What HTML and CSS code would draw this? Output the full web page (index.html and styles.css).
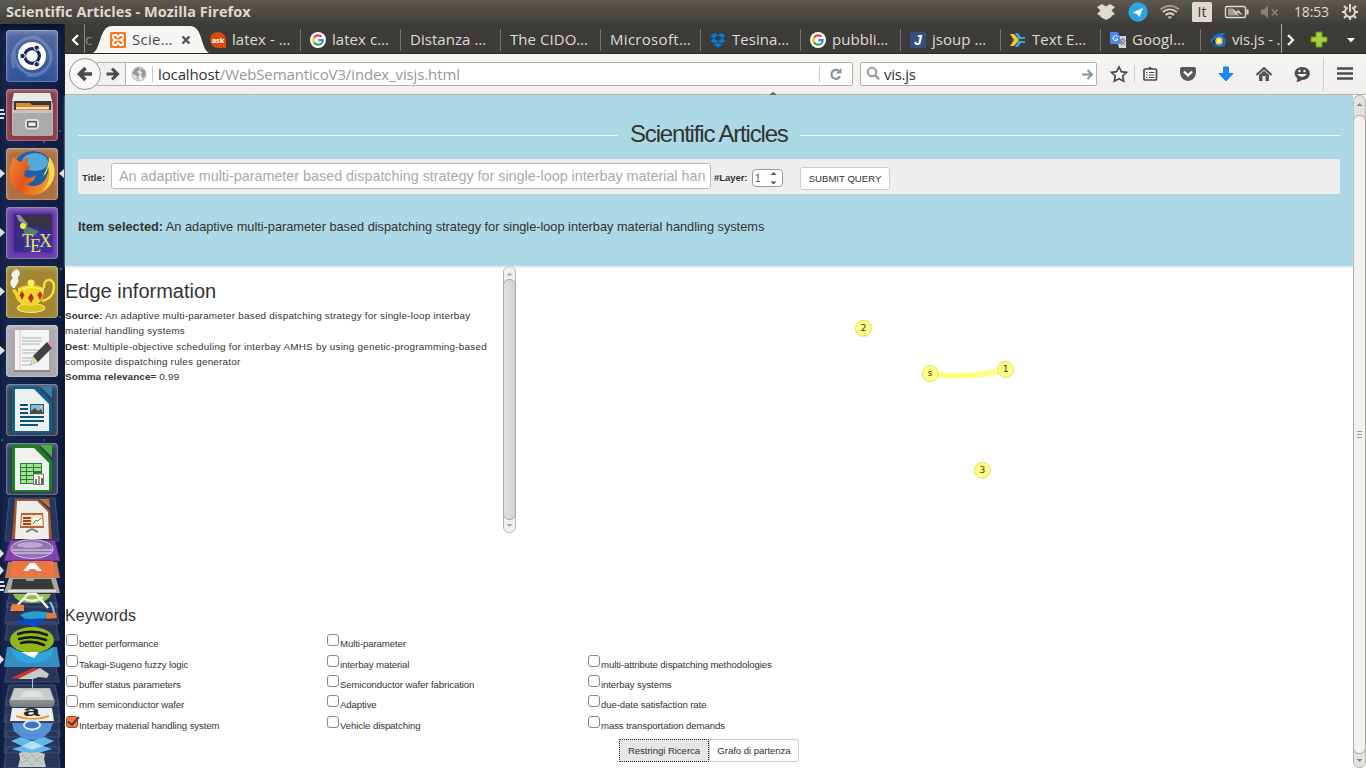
FILE: index.html
```html
<!DOCTYPE html>
<html lang="it">
<head>
<meta charset="utf-8">
<title>Scientific Articles</title>
<link rel="stylesheet" href="styles.css">
</head>
<body>
<div class="panel">
  <span class="panel-title">Scientific Articles - Mozilla Firefox</span>
  <svg class="indicators" width="276" height="24" viewBox="1090 0 276 24">
    <g fill="#dfdbd2">
      <path d="M1097 7l5-3 4 2.500 4-2.500 5 3-3.500 3.500 3.500 3.500-3.500 2v1l-5.500 3-5.500-3v-1l-3.500-2 3.500-3.500z"/>
      <circle cx="1138" cy="12" r="9.700" fill="#2ca5e0"/>
      <path d="M1132.500 12.500l10.500-4.500-3.500 9-2.500-3-4.500-1.500z" fill="#fff"/>
      <path d="M1167.500 16.500h4.500l-2.200 2.500z"/>
      <g fill="none" stroke="#dfdbd2" stroke-width="1.700"><path d="M1165.500 15q4.300-3.500 8.600 0"/><path d="M1162.800 12q7-5.500 14 0"/><path d="M1160.500 9.500q9.300-7.500 18.600 0" stroke="#98958d"/></g>
      <rect x="1192" y="2" width="20" height="20" rx="1.500"/>
      <text class="it" x="1197.500" y="17">It</text>
      <rect x="1225.500" y="6.500" width="20" height="11" rx="1.500" fill="none" stroke="#dfdbd2" stroke-width="1.400"/>
      <path d="M1246.500 9.500h2v5h-2z"/><path d="M1228 8.500h4l8 7h-12z" opacity=".6"/>
      <path d="M1231.500 8l5.500 4 1-2.500 5 6-5.500-3-1 2.500z"/>
      <path d="M1261 9.500h3l4-4v13l-4-4h-3z" fill="#85827a"/>
      <path d="M1272 9.500l5.500 6m0-6l-5.500 6" stroke="#85827a" stroke-width="1.700"/>
    </g>
    <text class="clock" x="1294" y="17" textLength="35">18:53</text>
    <g transform="translate(1350 12)" stroke="#dfdbd2" fill="none"><path d="M-2.300 -4.500A5 5 0 1 0 2.300 -4.500" stroke-width="2"/><path d="M0-8v8" stroke-width="2"/><path d="M-4.200-4.200l-1.800-1.800M4.200-4.200l1.800-1.800M-5.500 0h-2.500M5.500 0h2.500M-4 4l-2 2M4 4l2 2M0 5.500v2.500" stroke-width="2.200"/></g>
  </svg>
</div>
<div class="desktop">
  <div class="launcher">
    <div class="tiles">
      <svg class="tile blue" viewBox="0 0 52 52"><g fill="none" stroke="#a9bce0" stroke-width="3" opacity=".35"><path d="M8 38C2 20 15 4 33 8M19 9c15-5 29 9 25 25M44 20c5 14-7 28-23 25M36 43C21 49 7 36 8 21"/></g><circle cx="26" cy="26" r="14" fill="#fff"/><circle cx="26" cy="26" r="7.400" fill="none" stroke="#182b5b" stroke-width="3.200"/><g fill="#182b5b" stroke="#fff"><circle cx="16.500" cy="26" r="2.700"/><circle cx="30.700" cy="17.700" r="2.700"/><circle cx="30.700" cy="34.300" r="2.700"/></g></svg>
      <svg class="tile red" viewBox="0 0 52 52"><path d="M8 4h36l3 13v29H6V17z" fill="#b9b9b9"/><path d="M8 4h36l2 8H6z" fill="#e8e8e8"/><path d="M8 12h37v10H8z" fill="#383838"/><path d="M10 14h14l2 2h17v6H10z" fill="#e18536"/><path d="M10 18h33v2H10z" fill="#ffe3c5"/><path d="M7 21h39v26H7z" fill="#aaa"/><path d="M7 21h39v3H7z" fill="#c4c4c4"/><rect x="20" y="31" width="12" height="8.500" rx="2" fill="#555" stroke="#ddd" stroke-width="2"/><path d="M22.500 33.500h7v3.500h-7z" fill="#eee"/></svg>
      <svg class="tile orange" viewBox="0 0 52 52"><defs><linearGradient id="fox" x1="0" y1="0" x2="1" y2=".4"><stop stop-color="#f28a2c"/><stop offset=".5" stop-color="#e2541c"/><stop offset="1" stop-color="#f39a28"/></linearGradient></defs><circle cx="27" cy="23" r="20" fill="#205fa5"/><ellipse cx="29" cy="14" rx="13" ry="9" fill="#55a9d8"/><path d="M7 9l7 5 8-5-1 7 4 4-6 3-1 5 5 2 6-2c1 3-3 6-8 8 5 4 14 2 18-4 4-7 4-12 3-16l3 4c6 17-7 27-19 27C10 47 1 34 4 20z" fill="url(#fox)"/><path d="M43 9c10 11 6 28-6 34 7-9 8-17 5-24-1 6-3 8-5 9 4-7 6-13 6-19z" fill="#f9dc4e"/></svg>
      <svg class="tile purple" viewBox="0 0 52 52"><rect x="7" y="6" width="40" height="40" rx="3" fill="#392a82" stroke="#6a2fb0" stroke-width="2"/><path d="M9 8h36v14L23 18z" fill="#333641"/><path d="M10 8h4l8 9-3 5-3-6-3-2z" fill="#8d8f93"/><path d="M17 18l28 13v13H18z" fill="#3c33a8"/><path d="M17 18l16 6-6 6-9-4z" fill="#579456" opacity=".8"/><circle cx="17" cy="19" r="3" fill="#f0ed47"/><g class="tex"><text x="16" y="40" textLength="11">T</text><text x="24" y="45" textLength="10">E</text><text x="33" y="40" textLength="14">X</text></g></svg>
      <svg class="tile gold" viewBox="0 0 52 52"><path d="M7 22c-5-5-2-8 0-10-5-4 3-12 6-7 3 4-2 5-1 8 2 4-3 6-3 9z" fill="#f4f4ef"/><ellipse cx="25" cy="42" rx="14" ry="4.500" fill="#d9bf24" stroke="#fff066"/><path d="M38 22C37 11 48 12 48 20c0 9-4 13-12 15" stroke="#f7de38" stroke-width="2.500" fill="none"/><path d="M12 22q13-6 26 0c0 10-4 18-13 18S11 36 9 29l-3-5 3-1 3 4z" fill="#f2d62b"/><circle cx="25" cy="17" r="3.500" fill="#fff05e"/><path d="M12 24q13-5 26 0" stroke="#fff485" fill="none"/><path d="M16 25l2.500 4-2.500 5-2.500-5zM25 27l3 5-3 5-3-5zM34 25l2.500 4-2.500 5-2.500-5z" fill="#bd2b20"/></svg>
      <svg class="tile silver" viewBox="0 0 52 52"><path d="M9 5h34v41H9z" fill="#f4f4f4"/><path d="M14 5v40" stroke="#edbcbc"/><path d="M16 13h20m-20 3h20m-20 3h18m-18 6h17m-17 3h14m-14 5h10m-10 3h8m-8 4h9" stroke="#abb0b5"/><path d="M24 40l3-9L41 17l5 6-14 14z" fill="#3f4143"/><path d="M24 40l3-9 5 6z" fill="#e4d7a3"/><path d="M41 17l3-1 4 5-2 2z" fill="#dd91bb"/><path d="M8 46h36" stroke="#8b8b8b" stroke-width="2"/></svg>
      <svg class="tile dark" viewBox="0 0 52 52"><path d="M9 2h22l15 16v27q0 4-4 4H9q-3 0-3-3V5q0-3 3-3z" fill="#12618d"/><path d="M9 5h19l15 15v27H9z" fill="#eef0f0"/><path d="M34 2h12v12z" fill="#347fae"/><g stroke="#0b5379" stroke-width="2"><path d="M14 21h8m-8 4h8m-8 4h8m-8 4h24m-24 4h24m-24 4h18"/></g><path d="M24 20h14v10H24z" fill="#115f88"/><path d="M25 21h12v8H25z" fill="#82bce0"/><path d="M25 29v-2l4-3 3 3 3-2 2 4z" fill="#594a2a"/><circle cx="35" cy="23" r="1.500" fill="#f5c042"/></svg>
      <svg class="tile dark" viewBox="0 0 52 52"><path d="M9 2h22l15 16v27q0 4-4 4H9q-3 0-3-3V5q0-3 3-3z" fill="#198219"/><path d="M9 5h19l15 15v27H9z" fill="#f0f1f0"/><path d="M34 2h12v12z" fill="#4bb238"/><path d="M14 20h22v21H14z" fill="#1b8429"/><path d="M15 21h5v3h-5zm6 0h6v3h-6zm7 0h7v3h-7zM15 25h5v3h-5zm6 0h6v3h-6zm7 0h7v3h-7zM15 29h5v3h-5zm6 0h6v3h-6zM15 33h5v3h-5zm6 0h6v3h-6zM15 37h5v3h-5zm6 0h6v3h-6z" fill="#a9df98"/><path d="M27.500 31h10v10.500h-10z" fill="#fff" stroke="#777"/><path d="M29 36h2v5h-2z" fill="#3486c4"/><path d="M32 33h2v8h-2z" fill="#e78432"/><path d="M35 35h2v6h-2z" fill="#2672ad"/></svg>
    </div>
    <svg class="stack" width="65" height="273" viewBox="0 495 65 273">
      <defs><linearGradient id="metal" x2="0" y2="1"><stop stop-color="#b7b8b9"/><stop offset="1" stop-color="#767b82"/></linearGradient></defs>
      <g fill="#27365a" stroke="#4a5978" stroke-width=".8">
        <path d="M9 498h46l4 43H5z"/><path d="M10 592h44l4 15H6zM8 603h48l3 21H5zM8 622h48l3 18H5zM9 660h46l4 22H5zM9 685h46l4 20H5zM7 700h51l2 22H4zM7 715h51l2 22H4zM7 731h51l2 22H4zM7 747h51l2 21H4z"/>
      </g>
      <path d="M15 499h23l12 12 2 28H12z" fill="#a7582b"/><path d="M17 501h20l11 11 1 27H15z" fill="#f0eeea"/><path d="M39 499h10l1 9z" fill="#be7043"/><path d="M21 513h22l1 15H20z" fill="#bc6532"/><path d="M22 515h20l1 11H21z" fill="#f7e4cc"/><path d="M23 518h8m-8 3h8m-8 3h8" stroke="#9c4726" stroke-width="2"/><path d="M33 518h8v7h-8z" fill="#fff"/><path d="M33 524l3-4 2 1 3-3" stroke="#279539" fill="none"/><path d="M26 532l6-3 6 3" stroke="#888" stroke-width="2" fill="none"/>
      <path d="M10 540h45l5 21H4z" fill="#8146ac" stroke="#4c217f"/><ellipse cx="32" cy="549" rx="21" ry="9.500" fill="#8f75ad" stroke="#d2b8e8"/><path d="M12 550h41m-40 3h39" stroke="#e9d9f1"/><ellipse cx="30" cy="545" rx="13" ry="3" fill="#cfb9dd" opacity=".7"/>
      <path d="M8 562h49l3 16H5z" fill="#bf7b55"/><path d="M12 561h41l2 16H10z" fill="#ee7540"/><path d="M23 571l7-8h5l7 8h-5l-2-2h-5l-2 2z" fill="#fff"/>
      <path d="M9 578h47l4 15H4z" fill="#aaa8a0"/><path d="M13 579h38l3 10H11z" fill="#383a3b"/><path d="M8 591h48" stroke="#ddd" stroke-width="2"/><path d="M26 580h8" stroke="#fff"/>
      <path d="M13 594h38q-3 9-19 9t-19-9z" fill="#95bd47"/><path d="M15 608l13-14h8l12 14M23 598q9 6 20-1" stroke="#f0f1e6" stroke-width="2.500" fill="none"/><path d="M50 602q4 6 4 12" stroke="#86c3e2" stroke-width="2" fill="none"/>
      <path d="M12 604l12 1v6H10z" fill="#ed813c"/><path d="M20 615q12-7 35-1l-15 8q-13 0-20-7z" fill="#2b9dcb"/><path d="M14 623q8-5 17-4l17-1-9 5-4 6-8-5z" fill="#094cc0"/><path d="M46 613h10l1 5-10 1z" fill="#e27a34"/>
      <ellipse cx="32" cy="640" rx="22" ry="13" fill="#91b51d"/><path d="M18 634q15-5 29 1M19 639q14-4 27 1M21 643q12-3 23 2" stroke="#151a14" stroke-width="2.500" fill="none" stroke-linecap="round"/>
      <path d="M7 647h4q21 13 42 0h4l3 20H4z" fill="#388ec0"/><path d="M12 648q20 12 41 0-1 15-21 15t-20-15z" fill="#2ba7df"/><path d="M21 652h18l-5 6-5-2z" fill="#fff"/>
      <path d="M11 678l22-10 6 1-17 10z" fill="#cb3234"/><path d="M18 679l12-6 10-5 9 6-2 4-8-1-6 2z" fill="#c8cac9"/><path d="M32.500 678v20" stroke="#b6c1cb"/>
      <path d="M14 688h36l5 14-2 5H11l-2-5z" fill="url(#metal)"/><path d="M15 689h34l5 11H10z" fill="#cbcdcd"/><path d="M23 692q9-3 18 0l2 5H21z" fill="#e0e1e1"/>
      <path d="M12 708h40l2 13H10z" fill="#eef0ef"/><text class="amazon" x="23" y="716" textLength="17" lengthAdjust="spacingAndGlyphs">a</text><path d="M16 716q17 6 33 0" stroke="#f19a2e" stroke-width="2" fill="none"/>
      <path d="M12 723h41l-3 8q-7 9-17 9t-19-9z" fill="#5990d5"/><ellipse cx="32" cy="725" rx="8" ry="4.500" fill="#3e76c1" stroke="#d9eaff" stroke-width="2"/>
      <path d="M11 741l10-4 11 4 12-4 10 4-11 5 9 3-20 6-20-6 10-3z" fill="#62b7eb"/><path d="M32 741l11 5-11 4-10-4z" fill="#b5e1f8"/>
      <path d="M19 753q5-2 11 0l8-1 7 2-1 5 2 8H18l2-8z" fill="#c7cbc8"/><path d="M22 755l5 4 5-5 4 6 6-4M21 763l6-3 5 5 5-5 6 4" fill="none" stroke="#9ea5a5" stroke-dasharray="2 1"/>
    </svg>
    <svg class="running" width="65" height="744" viewBox="0 24 65 744">
      <g fill="#dce0e5"><path d="M0 169l5 4.500-5 4.500zM0 228l5 4.500-5 4.500zM0 287l5 4.500-5 4.500zM0 346l5 4.500-5 4.500zM0 549l4 4.500-4 4.500zM0 566l4 4.500-4 4.500zM0 655l4 4.500-4 4.500zM64 169l-5 4.500 5 4.500z"/><path d="M0 109h4v2H0zm0 4h5v2H0zm0 4h4v2H0zM0 581h4v2H0zm0 4h5v2H0zm0 4h4v2H0z"/></g>
      <g fill="#42679b"><circle cx="60" cy="131" r="1"/><circle cx="44" cy="142" r="1"/><circle cx="61" cy="269" r="1.200"/><circle cx="60" cy="317" r="1"/><circle cx="2" cy="440" r="1"/><circle cx="44" cy="440" r="1"/></g>
    </svg>
  </div>
  <div class="browser">
    <div class="tabs">
      <div class="tab-scroll"><svg width="12" height="16" viewBox="0 0 12 16"><path d="M9 3L4 8l5 5" class="chev"/></svg></div>
      <div class="tab-frag">c</div>
      <div class="tab active">
        <svg class="tab-shape" width="122" height="30" viewBox="0 0 122 30"><path d="M0 30C12 29 8 2 22 2H100C114 2 110 29 122 30z" fill="#f6f5f4"/></svg>
        <svg class="fav" viewBox="0 0 16 16"><rect width="16" height="16" rx="1.500" fill="#f47a24"/><path d="M3 4q0-1 1-1h2l2 2 2-2h2q1 0 1 1v2l-2 2 2 2v2q0 1-1 1h-2l-2-2-2 2H4q-1 0-1-1v-2l2-2-2-2z" fill="none" stroke="#fff" stroke-width="1.800"/><path d="M5 8h6" stroke="#fff" stroke-width="1.500"/></svg>
        <span class="label wide">Scie…</span>
        <svg class="close" width="10" height="10" viewBox="0 0 10 10"><path d="M1.500 1.500l7 7m0-7l-7 7" stroke="#555" stroke-width="2.400"/></svg>
      </div>
      <div class="tab"><svg class="fav" viewBox="0 0 16 16"><path d="M8 0a8 8 0 0 1 8 8v8H8A8 8 0 0 1 8 0z" fill="#dc4a09"/><text class="ask" x="1.800" y="11" textLength="12.500">ask</text></svg><span class="label">latex - …</span></div>
      <div class="tab"><svg class="fav" viewBox="0 0 16 16"><circle cx="8" cy="8" r="8" fill="#fff"/><g fill="none" stroke-width="2.200"><path d="M11.500 4.700A4.700 4.700 0 0 0 4 5.800" stroke="#ea4335"/><path d="M4 5.800a4.700 4.700 0 0 0 0 4.500" stroke="#fbbc05"/><path d="M4 10.300a4.700 4.700 0 0 0 7.300 1.200" stroke="#34a853"/><path d="M11.300 11.500c1-1 1.400-2 1.400-3.300H8.300" stroke="#4285f4"/></g></svg><span class="label">latex c…</span></div>
      <div class="tab"><span class="label">Distanza …</span></div>
      <div class="tab"><span class="label">The CIDO…</span></div>
      <div class="tab"><span class="label wide">Microsoft…</span></div>
      <div class="tab"><svg class="fav" viewBox="0 0 16 16"><path d="M5 1l3 2.500L3.500 6.200.5 3.700zM11 1l4.500 2.700-3 2.500L8 3.500zM.5 8.800l3-2.500L8 9l-3 2.500zM15.500 8.800l-3-2.500L8 9l3 2.500zM3.500 11.800L5 12.700l3-2.500 3 2.500 1.500-.9v1L8 15.500l-4.500-2.700z" fill="#007ee5"/></svg><span class="label">Tesina…</span></div>
      <div class="tab"><svg class="fav" viewBox="0 0 16 16"><circle cx="8" cy="8" r="8" fill="#fff"/><g fill="none" stroke-width="2.200"><path d="M11.500 4.700A4.700 4.700 0 0 0 4 5.800" stroke="#ea4335"/><path d="M4 5.800a4.700 4.700 0 0 0 0 4.500" stroke="#fbbc05"/><path d="M4 10.300a4.700 4.700 0 0 0 7.300 1.200" stroke="#34a853"/><path d="M11.300 11.500c1-1 1.400-2 1.400-3.300H8.300" stroke="#4285f4"/></g></svg><span class="label">pubbli…</span></div>
      <div class="tab"><svg class="fav" viewBox="0 0 16 16"><rect width="16" height="16" rx="2" fill="#35507f"/><text class="jfav" x="4" y="13">J</text></svg><span class="label">jsoup …</span></div>
      <div class="tab"><svg class="fav" viewBox="0 0 16 16"><path d="M0 2h4l5 6-5 6H0l4-6z" fill="#ffc61a"/><path d="M5 1h3l3 4h4v2H8zM8 9h7v2h-4l-3 4H5z" fill="#2da6dd"/></svg><span class="label">Text E…</span></div>
      <div class="tab"><svg class="fav" viewBox="0 0 16 16"><path d="M6 4h10v12H9z" fill="#d4d4d4"/><path d="M0 1q0-1 1-1h7l4 12H1q-1 0-1-1z" fill="#4c88ec"/><path d="M7.500 4.500A2.500 2.500 0 1 0 8 7H5.500" stroke="#fff" fill="none"/><path d="M10 8h5m-2-2v2m2 0q-1 4-4 5m0-4l4 4" stroke="#777" fill="none"/></svg><span class="label">Googl…</span></div>
      <div class="tab last"><svg class="fav" viewBox="0 0 16 16"><path d="M0 10C2 5 8 0 15 1l-2 3 3 4-1 6-4 1-8-1 3-1z" fill="#1474d4"/><path d="M2 10q5-8 12-1-5 6-12 1" fill="#062a52"/><circle cx="9" cy="9" r="3.800" fill="#ffc533"/><circle cx="9" cy="9" r="1.700" fill="#fff"/></svg><span class="label">vis.js - .</span></div>
      <svg class="tab-tools" width="85" height="30" viewBox="1281 24 85 30"><path d="M1281.500 24v30" stroke="#a8a69f"/><path class="chev" d="M1288 35l5 5-5 5"/><path d="M1316 32h6v5h5v5h-5v5h-6v-5h-5v-5h5z" fill="#a8cd3d" stroke="#659219"/><path d="M1347 38h8l-4 4.500z" fill="#fff"/></svg>
    </div>
    <div class="nav">
      <svg class="navbtns" width="60" height="40" viewBox="65 54 60 40"><path d="M97 62.500h28.500v23H97z" fill="#f1f1f0" stroke="#b6b0a7"/><circle cx="85" cy="74" r="15.500" fill="#f7f7f6" stroke="#9b9790"/><path d="M92 74H80m5.500-6L79.500 74l6 6" class="arrow"/><path d="M106.500 74H117m-5-5.500l5.500 5.500-5.500 5.500" class="arrow thin"/></svg>
      <div class="url"><svg class="globe" width="16" height="16" viewBox="0 0 16 16"><circle cx="8" cy="8" r="7" fill="#e6e6e6" stroke="#b5b5b5"/><path d="M1 8l3-5 4-2 1 3-3 2 3 2-2 3-3-2zM10 2l4 3 1 3-3 5-2-4 1-3-2-1z" fill="#999"/><path d="M4 12l3-1 1 3z" fill="#aaa"/></svg><i class="sep"></i><span class="address"><b>localhost</b>/WebSemanticoV3/index_visjs.html</span><i class="sep"></i><svg class="reload" width="32" height="22" viewBox="0 0 32 22"><path d="M18.800 7.800a4.500 4.500 0 1 0 1.200 5.500" fill="none" stroke="#8595a8" stroke-width="2.200"/><path d="M21.500 5v5.500h-5.500z" fill="#8595a8"/></svg></div>
      <div class="search"><svg width="18" height="20" viewBox="0 0 18 20"><circle cx="8" cy="8" r="4.200" fill="none" stroke="#999" stroke-width="2"/><path d="M11 11l4 4.500" stroke="#999" stroke-width="2.500"/></svg><span class="query">vis.js</span><svg width="13" height="13" viewBox="0 0 13 13"><path d="M1 6.500h10M6.500 2L11 6.500 6.500 11" fill="none" stroke="#8595a8" stroke-width="2"/></svg></div>
      <svg class="toolbar" width="269" height="40" viewBox="1097 54 269 40">
        <path d="M1119 67l2.300 4.700 5.200.7-3.800 3.600 1 5.200-4.700-2.500-4.700 2.500 1-5.200-3.800-3.600 5.200-.7z" fill="#fafafa" stroke="#4c4c4c" stroke-width="1.700"/>
        <path d="M1134.500 65v18M1323.500 57v34" stroke="#ccc"/>
        <rect x="1144" y="69" width="12.500" height="11" rx="1" fill="#fafafa" stroke="#4c4c4c" stroke-width="1.700"/><path d="M1147 69l3-2.500 3 2.500z" fill="#4c4c4c"/><path d="M1146 72.500h1.500m1.500 0h5.500m-8.500 2.500h1.500m1.500 0h5.500m-8.500 2.500h1.500m1.500 0h5.500" stroke="#4c4c4c" stroke-width="1.200"/>
        <path d="M1182 67h12q2 0 2 2v4q-1 7-8 8-7-1-8-8v-4q0-2 2-2z" fill="#595959"/><path d="M1184 71.500l4 4 4-4" fill="none" stroke="#fff" stroke-width="2.200"/>
        <path d="M1223.500 67h5v6.500h4.500l-7 7.500-7-7.500h4.500z" fill="#1689f2" stroke="#0872d6" stroke-width=".8"/>
        <path d="M1256.500 75l7.500-7 7.500 7" fill="none" stroke="#4c4c4c" stroke-width="2"/><path d="M1259 75l5-4.500 5 4.500v6h-3.500v-5h-3v5h-3.500z" fill="#565656"/>
        <path d="M1302 67c10.500 0 10.500 13 0 13q-2 1.500-5.500 2l1-3.500c-6-5-1.500-11.500 4.500-11.500z" fill="#4c4c4c"/><g fill="#fff"><circle cx="1299.500" cy="71" r="1.200"/><circle cx="1304.500" cy="71" r="1.200"/><path d="M1297 74h10q-5 6-10 0"/></g>
        <path d="M1337 68.500h16m-16 5h16m-16 5h16" stroke="#4c4c4c" stroke-width="2.600"/>
      </svg>
      <svg class="notch" width="6" height="4" viewBox="0 0 6 4"><path d="M0 3l3-2 3 2v1H0z" fill="#666"/></svg>
    </div>
    <div class="viewport">
      <div class="page">
        <header class="hero">
          <div class="heading"><i></i><h1>Scientific Articles</h1><i></i></div>
          <div class="form"><b class="flabel l1">Title:</b><div class="title-input">An adaptive multi-parameter based dispatching strategy for single-loop interbay material han</div><b class="flabel l2">#Layer:</b><div class="spin"><span>1</span><svg width="7" height="14" viewBox="0 0 7 14"><path d="M.5 4L3.500 1l3 3zM.5 10.500h6l-3 3z" fill="#555"/></svg></div><div class="btn submit">SUBMIT QUERY</div></div>
          <p class="selected"><b>Item selected:</b> An adaptive multi-parameter based dispatching strategy for single-loop interbay material handling systems</p>
        </header>
        <div class="middle">
          <div class="info">
            <div class="info-text"><h2>Edge information</h2><p><b>Source:</b> An adaptive multi-parameter based dispatching strategy for single-loop interbay<br>material handling systems<br><b>Dest</b>: Multiple-objective scheduling for interbay AMHS by using genetic-programming-based<br>composite dispatching rules generator<br><b>Somma relevance=</b> 0.99</p></div>
            <div class="scroll"><svg width="13" height="12" viewBox="0 0 13 12"><path d="M3.500 8.500l3-3 3 3z" fill="#aaa"/></svg><div class="thumb"></div><svg width="13" height="12" viewBox="0 0 13 12"><path d="M3.500 4l3 3 3-3z" fill="#aaa"/></svg></div>
          </div>
          <svg class="graph" width="837" height="334" viewBox="516 266 837 334">
            <path d="M930 373.700Q968 379 1005.500 369.500" fill="none" stroke="#ffff80" stroke-width="5.500"/>
            <g fill="#ffff80" stroke="#dcdc78"><circle cx="863.500" cy="328.300" r="8"/><circle cx="930.200" cy="373.400" r="8"/><circle cx="1005.500" cy="369.300" r="8"/><circle cx="982.400" cy="470.300" r="8"/></g>
            <g class="node"><text x="863.500" y="331.200">2</text><text x="930.200" y="376.200">s</text><text x="1005.500" y="372.200">1</text><text x="982.400" y="473.300">3</text></g>
          </svg>
        </div>
        <section class="keywords">
          <h3>Keywords</h3>
          <div class="kw-grid">
            <label><i></i>better performance</label><label><i></i>Multi-parameter</label><span></span>
            <label><i></i>Takagi-Sugeno fuzzy logic</label><label><i></i>interbay material</label><label><i></i>multi-attribute dispatching methodologies</label>
            <label><i></i>buffer status parameters</label><label><i></i>Semiconductor wafer fabrication</label><label><i></i>interbay systems</label>
            <label><i></i>mm semiconductor wafer</label><label><i></i>Adaptive</label><label><i></i>due-date satisfaction rate</label>
            <label><i class="on"><svg width="14" height="13" viewBox="0 0 14 13"><path d="M2 5.500l4 3.500L13 1" fill="none" stroke="#4a3a35" stroke-width="1.900"/></svg></i>Interbay material handling system</label><label><i></i>Vehicle dispatching</label><label><i></i>mass transportation demands</label>
          </div>
          <div class="actions"><div class="btn focus">Restringi Ricerca</div><div class="btn">Grafo di partenza</div></div>
        </section>
      </div>
      <div class="scroll main"><svg width="13" height="19" viewBox="0 0 13 19"><path d="M3.500 10l3-3 3 3z" fill="#888"/></svg><div class="thumb"><svg width="7" height="9" viewBox="0 0 7 9"><path d="M1 1.500h5m-5 3h5m-5 3h5" stroke="#999"/></svg></div><svg width="13" height="13" viewBox="0 0 13 13"><path d="M3.500 5l3 3 3-3z" fill="#888"/></svg></div>
    </div>
  </div>
</div>
</body>
</html>
```
FILE: styles.css
```css
* { box-sizing: border-box; }
body { margin: 0; width: 1366px; height: 768px; overflow: hidden; font-family: "Liberation Sans", sans-serif; color: #333; background: #fff; }
svg { display: block; flex: none; }
h1, h2, h3, p { margin: 0; font-weight: normal; }
i { display: block; font-style: normal; }

.panel { height: 24px; display: flex; justify-content: space-between; align-items: center; background: linear-gradient(#5b5950, #3f3e39); font-family: "Open Sans", sans-serif; color: #dfdbd2; }
.panel-title { padding-left: 6px; margin-top: -2px; font-size: 14.500px; font-weight: 700; letter-spacing: .04px; }
.it { font: 14px "Open Sans", sans-serif; fill: #333; }
.clock { font: 14px "Open Sans", sans-serif; fill: #dfdbd2; }

.desktop { display: flex; height: 744px; }
.launcher { position: relative; width: 65px; flex: none; background: linear-gradient(90deg, #172750, #111f43 85%); border-right: 1px solid #1c1e26; box-shadow: inset 0 6px 6px #09132c; }
.tiles { display: flex; flex-direction: column; gap: 7px; padding: 6px 0 0 6px; height: 471px; }
.tile { width: 52px; height: 52px; border-radius: 4px; box-shadow: inset 0 0 0 1px rgba(255,255,255,.2), inset 0 2px 5px rgba(255,255,255,.3); }
.blue { background: linear-gradient(#566d9f, #30509a); }
.red { background: #8b3d48; }
.orange { background: #ae7042; }
.purple { background: #6740a5; }
.gold { background: #a28631; }
.silver { background: #aaa9b0; }
.dark { background: #33415e; }
.tex { font: 18px "Liberation Serif", serif; fill: #f0e34c; }
.amazon { font: bold 15px "Liberation Sans", sans-serif; fill: #252525; }
.running { position: absolute; left: 0; top: 0; }

.browser { width: 1301px; display: flex; flex-direction: column; }
.tabs { height: 30px; display: flex; background: #3c3b37; border-bottom: 1px solid #2b2a27; font: 15px "Open Sans", sans-serif; color: #dfdbd2; overflow: hidden; }
.tab-scroll { width: 20px; display: flex; align-items: center; padding: 2px 0 0 4px; border-right: 1px solid #8b8982; }
.tab-frag { width: 15px; line-height: 31px; color: #8d8b85; }
.chev { fill: none; stroke: #fff; stroke-width: 2.200; }
.tab { position: relative; width: 100px; flex: none; height: 30px; padding: 2px 0 0 10px; display: flex; align-items: center; gap: 6px; white-space: nowrap; }
.tab + .tab:not(.last):not(.active)::after { content: ""; position: absolute; right: -1px; top: 5px; height: 22px; width: 1px; background: #77756f; }
.active { z-index: 1; color: #4c4c4c; }
.tab-shape { position: absolute; left: -10px; top: 0; z-index: -1; }
.close { margin-left: auto; margin-right: 9px; }
.last { width: 81px; }
.last .label { letter-spacing: -.15px; }
.fav { width: 16px; height: 16px; }
.label { margin-top: -2px; letter-spacing: .05px; }
.wide { letter-spacing: .3px; }
.ask { font: bold 7.500px "Open Sans", sans-serif; fill: #fff; }
.jfav { font: italic bold 14px "Liberation Sans", sans-serif; fill: #fff; }

.nav { position: relative; height: 41px; display: flex; background: linear-gradient(#f6f5f4, #f0efed); border-bottom: 1px solid #b6b0a7; font-family: "Open Sans", sans-serif; font-size: 15px; }
.arrow { fill: none; stroke: #4c4c4c; stroke-width: 3.600; }
.thin { stroke-width: 3; }
.url, .search { display: flex; align-items: center; height: 24px; margin-top: 8px; border: 1px solid #b6b0a7; background: #fff; border-radius: 2px; }
.url { width: 728px; padding-left: 5px; border-radius: 0 2px 2px 0; }
.sep { width: 1px; height: 16px; background: #ccc; }
.globe { margin-right: 5px; }
.address { flex: 1; padding-left: 5px; color: #999; white-space: nowrap; letter-spacing: -.12px; }
.address b { font-weight: 400; color: #333; }
.search { width: 237px; margin-left: 7px; padding: 0 2px 0 3px; }
.query { flex: 1; padding-left: 2px; color: #333; letter-spacing: -.3px; }
.notch { position: absolute; left: 705px; top: 37px; }

.viewport { flex: 1; display: flex; min-height: 0; }
.page { width: 1288px; }
.hero { height: 171px; padding: 0 13px; background: #add8e6; box-shadow: 0 1px 2px #ddd; position: relative; }
.heading { display: flex; align-items: center; gap: 12px; padding-top: 24px; height: 56px; margin-bottom: 8px; }
.heading i { flex: 1; height: 1px; margin-top: 1px; background: #eef7fa; }
h1 { font-size: 24px; line-height: 32px; margin-top: -3px; letter-spacing: -1.180px; width: 158px; white-space: nowrap; }
.form { height: 35px; display: flex; align-items: center; background: #eee; border-radius: 2px; padding-left: 4px; }
.flabel { font-size: 9.600px; padding-top: 2px; white-space: nowrap; }
.l1 { width: 29px; letter-spacing: .1px; }
.l2 { width: 38px; margin-left: 3px; letter-spacing: -.1px; }
.title-input { width: 600px; height: 26px; margin-bottom: 1px; border: 1px solid #bbb; border-radius: 3px; background: #fff; padding: 0 7px; font-size: 14.400px; letter-spacing: -.025px; line-height: 25px; color: #aaa; white-space: nowrap; overflow: hidden; }
.spin { display: flex; align-items: center; justify-content: space-between; width: 31px; height: 18px; margin: 3px 17px 0 0; padding: 0 5px 0 2px; border: 1px solid #999; border-radius: 4px; background: #fff; font-size: 10px; color: #844; }
.btn { border: 1px solid #ccc; border-radius: 3px; background: #fff; height: 23px; line-height: 22px; text-align: center; font-size: 9.600px; white-space: nowrap; width: 90px; }
.submit { margin-top: 3px; }
.selected { margin-top: 25px; font-size: 12.800px; letter-spacing: -.025px; line-height: 16px; white-space: nowrap; }

.middle { display: flex; height: 334px; }
.info { display: flex; width: 451px; height: 267px; }
.info-text { width: 438px; padding-top: 13px; white-space: nowrap; }
h2 { font-size: 20px; line-height: 24px; }
.info-text p { margin-top: 5px; font-size: 9.900px; letter-spacing: .235px; line-height: 15.300px; }
.info-text b { letter-spacing: .1px; }
.scroll { width: 13px; display: flex; flex-direction: column; border: 1px solid #b8b4af; border-radius: 6px; background: #f2f1f0; }
.scroll svg { margin-left: -1px; }
.thumb { flex: 1; margin: 0 -1px; border: 1px solid #aaa6a1; border-radius: 6px; background: linear-gradient(90deg, #e2e0de, #d5d3d0); }
.main .thumb { display: flex; align-items: center; justify-content: center; background: #f2f1f0; }
.main { background: #e4e2e0; }
.node { font: 9px "DejaVu Sans", sans-serif; fill: #343434; text-anchor: middle; }

h3 { font-size: 16px; line-height: 20px; padding-top: 6px; height: 34px; letter-spacing: .1px; }
.kw-grid { display: grid; grid-template-columns: 261px 261px 261px; grid-template-rows: 21px 20px 20px 21px 20px; padding-left: 1px; font-size: 9.600px; letter-spacing: -.09px; }
.kw-grid label { display: flex; gap: 1px; line-height: 20px; white-space: nowrap; }
.kw-grid i { width: 12px; height: 12px; flex: none; border: 1px solid #888; border-radius: 3px; background: #fff; }
.kw-grid .on { background: #f2764a; border-color: #a54a2b; }
.on svg { margin: -1px 0 0 -1px; }
.actions { display: flex; padding: 3px 0 0 554px; }
.actions .btn { letter-spacing: -.05px; }
.focus { border: 1px dotted #222; background: #e6e6e6; border-radius: 1px; }
```
